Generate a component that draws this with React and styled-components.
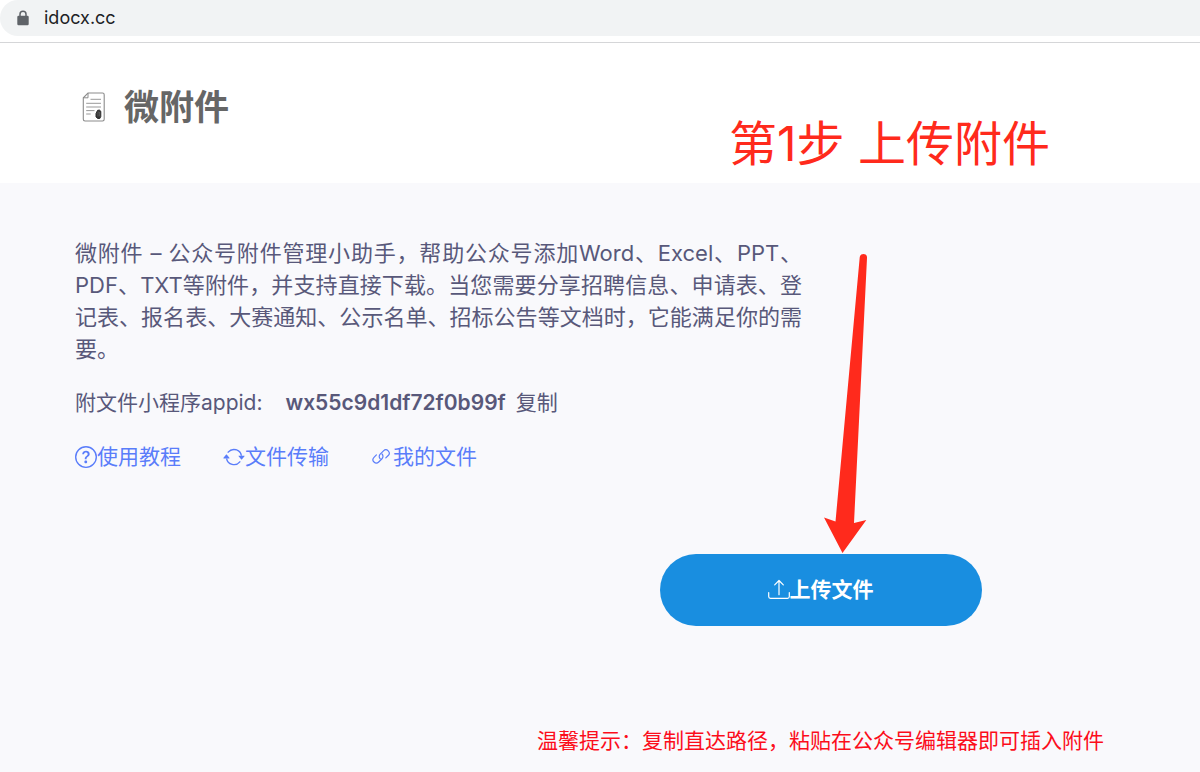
import React from "react";
import styled, { createGlobalStyle } from "styled-components";
import { BsArrowRepeat, BsQuestionCircle } from "react-icons/bs";

const GlobalStyle = createGlobalStyle`
  *, *::before, *::after { box-sizing: border-box; }
  body {
    margin: 0;
    background: #f9f9fc;
    color: #58587a;
    font-family: Inter, "Noto Sans CJK SC", sans-serif;
    font-size: 21px;
    line-height: 32px;
  }
`;

const Page = styled.div`
  min-height: 100vh;
  overflow: hidden;
`;

const BrowserBar = styled.div`
  height: 43px;
  background: #fff;
  border-bottom: 1px solid #d5d6d8;
`;

const AddressField = styled.div`
  display: flex;
  align-items: center;
  gap: 15px;
  height: 36px;
  padding-left: 17px;
  border-radius: 18px 0 0 18px;
  background: #f1f3f4;
  color: #5f6368;
`;

const Address = styled.span`
  color: #202124;
  font-size: 18px;
`;

const Header = styled.header`
  display: flex;
  justify-content: space-between;
  padding: 40px 150px 0 82px;
  height: 140px;
  background: #fff;
`;

const Brand = styled.a`
  display: flex;
  align-items: center;
  gap: 18px;
  height: 48px;
  color: #666;
  font-size: 35px;
  font-weight: 700;
  text-decoration: none;
`;

const StepTitle = styled.p`
  margin: 25px 0 0;
  color: #ff2a1c;
  font-size: 48px;
  line-height: 72px;
  white-space: nowrap;
`;

const Main = styled.main`
  display: flex;
  flex-direction: column;
  gap: 22px;
  padding: 54px 75px 16px;
`;

const Intro = styled.p`
  max-width: 727px;
  margin: 0;
  font-size: 22px;
  text-align: justify;
`;

const AppIdRow = styled.div`
  display: flex;
  align-items: center;
`;

const AppId = styled.strong`
  margin: 0 10px 0 23px;
  font-weight: 600;
`;

const CopyButton = styled.button`
  padding: 0;
  border: 0;
  background: none;
  color: inherit;
  font: inherit;
  cursor: pointer;
`;

const Links = styled.nav`
  display: flex;
  gap: 42px;
`;

const IconLink = styled.a`
  display: flex;
  align-items: center;
  color: #5a7dfa;
  text-decoration: none;
`;

const UploadArea = styled.section`
  display: flex;
  flex-direction: column;
  align-items: center;
  gap: 99px;
  align-self: flex-end;
  width: 58%;
  margin-top: 59px;
`;

const UploadAnchor = styled.div`
  position: relative;
`;

const UploadButton = styled.button`
  display: flex;
  align-items: center;
  justify-content: center;
  width: 322px;
  height: 72px;
  border: 0;
  border-radius: 36px;
  background: #198ee0;
  color: #fff;
  font: inherit;
  font-weight: 700;
  cursor: pointer;
`;

const Pointer = styled.svg`
  position: absolute;
  bottom: 100%;
  left: 50%;
  pointer-events: none;
`;

const Hint = styled.p`
  margin: 0;
  color: #fc0d1b;
  white-space: nowrap;
`;

function LockIcon() {
  return (
    <svg width="12" height="16" viewBox="0 0 12 16" aria-hidden="true">
      <path d="M3 7V4.2a3 3 0 0 1 6 0V7" fill="none" stroke="currentColor" strokeWidth="1.5" />
      <rect x="0.3" y="5.8" width="11.4" height="9.4" rx="1.2" fill="currentColor" />
    </svg>
  );
}

function DocumentIcon() {
  return (
    <svg width="24" height="30" viewBox="0 0 24 30" fill="none" aria-hidden="true">
      <path d="M6 1H20.5Q22.2 1 22.2 2.7V27.3Q22.2 29 20.5 29H3Q1.3 29 1.3 27.3V5.8Z" stroke="#8c8c8c" strokeWidth="1.1" />
      <path d="M6 1V5.8H1.3" stroke="#8c8c8c" strokeWidth="1" />
      <path d="M8.5 7.3H19M4.2 11.3H19M4.2 15H19M4.2 18.6H12.5M4.2 22H8.7" stroke="#999" strokeWidth="1" />
      <path d="M14 21.5l1.6-3.2q2-1 3.2 1v5.2l-1 2h-2.200l-1.600-1.600z" fill="#333" stroke="#333" strokeLinejoin="round" />
      <path d="M16 24.5V20.8q.1-1 .8-1t.8 1v3.5" stroke="#777" strokeWidth="0.6" />
    </svg>
  );
}

function ChainIcon() {
  return (
    <svg width="22" height="22" viewBox="0 0 22 22" fill="none" stroke="currentColor" strokeWidth="1.2" strokeLinecap="round" aria-hidden="true">
      <path d="M9.2 12.8a3.300 3.300 0 0 1 0-4.700l3.300-3.300a3.300 3.300 0 0 1 4.700 4.700l-2.400 2.400" />
      <path d="M11 8a3.300 3.300 0 0 1 0 4.700l-3.300 3.300a3.300 3.300 0 0 1-4.700-4.700l2.400-2.400" />
    </svg>
  );
}

function TrayUploadIcon() {
  return (
    <svg width="22" height="22" viewBox="0 0 22 22" fill="none" stroke="currentColor" strokeWidth="1.2" strokeLinecap="round" strokeLinejoin="round" aria-hidden="true">
      <path d="M.7 13.500v4q0 1.800 1.800 1.800h17q1.800 0 1.800-1.800v-4" />
      <path d="M11 15.700V1.800M6.700 5.800 11 1.500l4.300 4.300" />
    </svg>
  );
}

export default function App() {
  return (
    <Page>
      <GlobalStyle />
      <BrowserBar>
        <AddressField>
          <LockIcon />
          <Address>idocx.cc</Address>
        </AddressField>
      </BrowserBar>
      <Header>
        <Brand href="#">
          <DocumentIcon />
          微附件
        </Brand>
        <StepTitle>第1步 上传附件</StepTitle>
      </Header>
      <Main>
        <Intro>
          微附件 – 公众号附件管理小助手，帮助公众号添加Word、Excel、PPT、PDF、TXT等附件，并支持直接下载。当您需要分享招聘信息、申请表、登记表、报名表、大赛通知、公示名单、招标公告等文档时，它能满足你的需要。
        </Intro>
        <AppIdRow>
          <span>附文件小程序appid:</span>
          <AppId>wx55c9d1df72f0b99f</AppId>
          <CopyButton type="button">复制</CopyButton>
        </AppIdRow>
        <Links>
          <IconLink href="#guide">
            <BsQuestionCircle size={22} />
            使用教程
          </IconLink>
          <IconLink href="#transfer">
            <BsArrowRepeat size={22} />
            文件传输
          </IconLink>
          <IconLink href="#files">
            <ChainIcon />
            我的文件
          </IconLink>
        </Links>
        <UploadArea>
          <UploadAnchor>
            <Pointer width="50" height="300" viewBox="0 0 50 300" aria-hidden="true">
              <path
                d="M38.700 3.500Q39 0 42.500 0Q46.200 0 46 4L33 269L45.300 266L21.500 299L3 263.500L14.500 267.500Z"
                fill="#ff2a1c"
              />
            </Pointer>
            <UploadButton type="button">
              <TrayUploadIcon />
              上传文件
            </UploadButton>
          </UploadAnchor>
          <Hint>温馨提示：复制直达路径，粘贴在公众号编辑器即可插入附件</Hint>
        </UploadArea>
      </Main>
    </Page>
  );
}
